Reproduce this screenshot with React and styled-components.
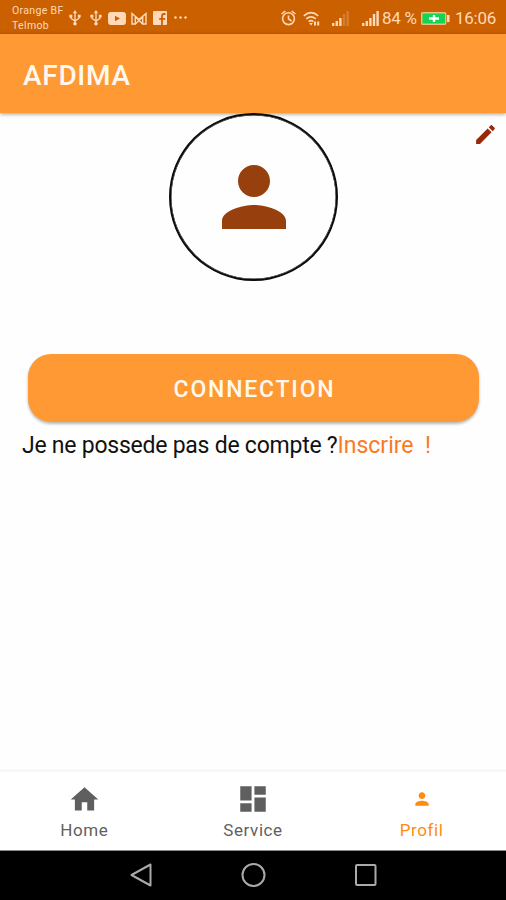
import React from "react";
import styled, { createGlobalStyle } from "styled-components";

const GlobalStyle = createGlobalStyle`
  * {
    box-sizing: border-box;
  }
  body {
    margin: 0;
    background: #fff;
    font-family: Roboto, "Liberation Sans", sans-serif;
  }
`;

const Screen = styled.div`
  width: 506px;
  height: 900px;
  display: flex;
  flex-direction: column;
  background: #fefefe;
  overflow: hidden;
`;

const StatusBar = styled.div`
  flex: none;
  height: 34px;
  display: flex;
  align-items: center;
  justify-content: space-between;
  padding: 2px 10px 0 12px;
  background: #cb6000;
  color: #ffd9b8;
`;

const StatusGroup = styled.div`
  display: flex;
  align-items: center;
`;

const Operator = styled.div`
  width: 52px;
  font-size: 10.5px;
  line-height: 15px;
  letter-spacing: 0.35px;
  white-space: nowrap;
`;

const StatusText = styled.span`
  width: ${(props) => props.$width}px;
  margin-left: ${(props) => props.$left || 0}px;
  font-size: 17px;
  line-height: 20px;
  letter-spacing: -0.25px;
  white-space: nowrap;
`;

const StatusIcon = styled.svg`
  display: block;
  flex: none;
  margin-left: ${(props) => props.$left || 0}px;
`;

const Header = styled.header`
  position: relative;
  flex: none;
  height: 79px;
  display: flex;
  align-items: center;
  padding: 4px 23px 0;
  background: #ff9933;
  box-shadow: 0 1px 4px rgba(0, 0, 0, 0.4);
`;

const Title = styled.h1`
  margin: 0;
  color: #fff8ee;
  font-size: 28px;
  font-weight: 500;
  line-height: 32px;
  letter-spacing: 0.7px;
`;

const Content = styled.main`
  flex: 1;
  display: flex;
  flex-direction: column;
`;

const ProfileRow = styled.div`
  display: grid;
  grid-template-columns: 169px 169px 1fr;
  align-items: start;
`;

const Avatar = styled.div`
  grid-column: 2;
  position: relative;
  height: 168px;
  display: flex;
  align-items: center;
  justify-content: center;
  border: 2px solid #0b0b0b;
  border-radius: 50%;
  box-shadow: inset 0 0 0 0.5px #0b0b0b;
`;

const EditButton = styled.button`
  justify-self: end;
  margin: 9px 8px 0 0;
  padding: 0;
  border: 0;
  background: none;
  color: #962a0b;
`;

const ConnectButton = styled.button`
  height: 68px;
  margin: 73px 27px 0 28px;
  padding: 3px 0 0 2px;
  border: 0;
  border-radius: 23px;
  background: #ff9933;
  box-shadow: 0 2px 3px rgba(0, 0, 0, 0.28);
  color: #fff8ee;
  font-family: inherit;
  font-size: 23px;
  font-weight: 500;
  letter-spacing: 1.8px;
`;

const SignUp = styled.p`
  margin: 9px 22px 0;
  padding-top: 1px;
  color: #111;
  font-size: 23px;
  line-height: 28px;
  letter-spacing: -0.24px;
  white-space: pre;
`;

const SignUpLink = styled.span`
  color: #fb7a22;
  letter-spacing: 0;
`;

const Tabs = styled.nav`
  flex: none;
  height: 82px;
  display: grid;
  grid-template-columns: repeat(3, 1fr);
  border-top: 3px solid #f7f7f7;
  border-bottom: 1px solid #8a8a8a;
  background: #fff;
`;

const Tab = styled.div`
  display: flex;
  flex-direction: column;
  align-items: center;
  padding-top: 10px;
  color: ${(props) => (props.$active ? "#ff8c0f" : "#5f5f5f")};
`;

const TabIcon = styled.div`
  height: 34px;
  display: flex;
  align-items: center;
`;

const TabLabel = styled.span`
  margin-top: 4px;
  font-size: 17px;
  line-height: 20px;
  letter-spacing: 0.6px;
`;

const SystemBar = styled.div`
  flex: none;
  height: 49px;
  display: flex;
  justify-content: center;
  align-items: center;
  gap: 84px;
  padding-bottom: 1px;
  background: #000;
`;

const PERSON =
  "M12 12c2.21 0 4-1.79 4-4s-1.79-4-4-4-4 1.79-4 4 1.79 4 4 4zm0 2c-2.67 0-8 1.34-8 4v2h16v-2c0-2.66-5.33-4-8-4z";
const HOME = "M10 20v-6h4v6h5v-8h3L12 3 2 12h3v8z";
const DASHBOARD = "M3 13h8V3H3v10zm0 8h8v-6H3v6zm10 0h8V11h-8v10zm0-18v6h8V3h-8z";
const EDIT =
  "M3 17.25V21h3.75L17.81 9.94l-3.75-3.75L3 17.25zM20.71 7.04c.39-.39.39-1.02 0-1.41l-2.34-2.34c-.39-.39-1.02-.39-1.41 0l-1.83 1.83 3.75 3.75 1.83-1.83z";

function Icon({ path, size, color = "currentColor" }) {
  return (
    <svg width={size} height={size} viewBox="0 0 24 24" fill={color} display="block">
      <path d={path} />
    </svg>
  );
}

function Usb({ left }) {
  return (
    <StatusIcon $left={left} width="12" height="16" viewBox="0 0 12 17" fill="none" stroke="currentColor" strokeWidth="1.4">
      <path d="M6 2v13M1.6 6v2.2c0 2 4.4 2 4.4 4.2M10.4 6v2.2c0 2-4.4 2-4.4 4.2" />
      <path d="M6 0 8.3 3.5H3.7zM0 5h3.2v3H0zM9 5h3v3H9z" fill="currentColor" stroke="none" />
      <circle cx="6" cy="14.6" r="1.9" fill="currentColor" stroke="none" />
    </StatusIcon>
  );
}

function Signal({ left, width, bars }) {
  return (
    <StatusIcon $left={left} width={width} height="16" viewBox={`0 0 ${width} 16`} fill="currentColor">
      {bars.map(([height, opacity], i) => (
        <rect key={i} x={i * 3.6} y={16 - height} width="2.4" height={height} opacity={opacity} />
      ))}
    </StatusIcon>
  );
}

function Notifications() {
  return (
    <StatusGroup>
      <Operator>
        Orange BF
        <br />
        Telmob
      </Operator>
      <Usb left={5} />
      <Usb left={9} />
      <StatusIcon $left={6} width="18" height="13" viewBox="0 0 18 13">
        <rect width="18" height="13" rx="3" fill="currentColor" />
        <path d="M7 3.7v5.6l5-2.8z" fill="#cb6000" />
      </StatusIcon>
      <StatusIcon $left={5} width="16" height="13" viewBox="0 0 16 13" fill="none" stroke="currentColor" strokeWidth="1.4">
        <path d="M1 12V1.5L8 7.5l7-6V12h-3.3V5L8 8.4 4.3 5v7zM1 12h3.3M11.7 12H15M4.3 12 8 8.4l3.7 3.6" />
      </StatusIcon>
      <StatusIcon $left={6} width="14" height="14" viewBox="0 0 14 14">
        <rect width="14" height="14" rx="1" fill="currentColor" />
        <path d="M9 14V8.5M12.5 3H11Q9 3 9 5.2V14M6.2 7.8h6" fill="none" stroke="#cb6000" strokeWidth="1.8" />
      </StatusIcon>
      <StatusIcon $left={7} width="13" height="5" viewBox="0 0 13 5" fill="currentColor">
        <circle cx="1.5" cy="1.5" r="1.2" />
        <circle cx="6.5" cy="1.5" r="1.2" />
        <circle cx="11.5" cy="1.5" r="1.2" />
      </StatusIcon>
    </StatusGroup>
  );
}

function DeviceStatus() {
  return (
    <StatusGroup>
      <StatusIcon width="15" height="16" viewBox="0 0 15 16" fill="none" stroke="currentColor" strokeWidth="1.6">
        <circle cx="7.5" cy="8.7" r="5.9" />
        <path d="M.6 4 4.3 1M14.4 4l-3.7-3M7.5 5.4v3.5l3 2.1" />
      </StatusIcon>
      <StatusIcon $left={7} width="17" height="15" viewBox="0 0 17 15" fill="none" stroke="currentColor" strokeWidth="1.6">
        <path d="M.8 4.8q7.2-6.4 14.4 0M3.2 7.8q4.8-4 9.6 0M5.6 10.7q2.4-2 4.8 0" />
        <path d="M6.2 12h3.6L8 14.4zM11 10.5h2v4h-2zM14.2 10.5h2v4h-2z" fill="currentColor" stroke="none" />
      </StatusIcon>
      <Signal left={12} width={18} bars={[[3, 1], [5, 1], [8, 1], [12, 0.25], [15, 0.25]]} />
      <Signal left={12} width={18} bars={[[3, 1], [5, 1], [8, 1], [12, 1], [15, 1]]} />
      <StatusText $left={2} $width={36}>84 %</StatusText>
      <StatusIcon $left={3} width="29" height="13" viewBox="0 0 29 13">
        <rect x=".7" y=".7" width="24" height="11.6" rx="1" fill="#12d552" stroke="#eebd88" strokeWidth="1.4" />
        <rect x="26" y="3" width="2.5" height="7" fill="currentColor" />
        <path d="M13 3v7M8 6.5h10" stroke="#fff" strokeWidth="2.4" />
      </StatusIcon>
      <StatusText $left={5} $width={41}>16:06</StatusText>
    </StatusGroup>
  );
}

const tabs = [
  { label: "Home", path: HOME, size: 33 },
  { label: "Service", path: DASHBOARD, size: 34 },
  { label: "Profil", path: PERSON, size: 20, active: true },
];

export default function App() {
  return (
    <Screen>
      <GlobalStyle />
      <StatusBar>
        <Notifications />
        <DeviceStatus />
      </StatusBar>
      <Header>
        <Title>AFDIMA</Title>
      </Header>
      <Content>
        <ProfileRow>
          <Avatar>
            <Icon path={PERSON} size={96} color="#983f0e" />
          </Avatar>
          <EditButton aria-label="Modifier">
            <Icon path={EDIT} size={25} />
          </EditButton>
        </ProfileRow>
        <ConnectButton>CONNECTION</ConnectButton>
        <SignUp>
          Je ne possede pas de compte ?<SignUpLink>{"Inscrire  !"}</SignUpLink>
        </SignUp>
      </Content>
      <Tabs>
        {tabs.map((tab) => (
          <Tab key={tab.label} $active={tab.active}>
            <TabIcon>
              <Icon path={tab.path} size={tab.size} />
            </TabIcon>
            <TabLabel>{tab.label}</TabLabel>
          </Tab>
        ))}
      </Tabs>
      <SystemBar>
        <svg width="29" height="26" viewBox="0 0 29 26" fill="none" stroke="#aaa" strokeWidth="2">
          <path d="M23.5 2.5v21L4.5 13z" strokeLinejoin="round" />
        </svg>
        <svg width="26" height="26" viewBox="0 0 26 26" fill="none" stroke="#aaa" strokeWidth="2">
          <circle cx="13.5" cy="13" r="11" />
        </svg>
        <svg width="29" height="26" viewBox="0 0 29 26" fill="none" stroke="#aaa" strokeWidth="2">
          <rect x="6" y="3" width="19.5" height="20" rx="1" />
        </svg>
      </SystemBar>
    </Screen>
  );
}
